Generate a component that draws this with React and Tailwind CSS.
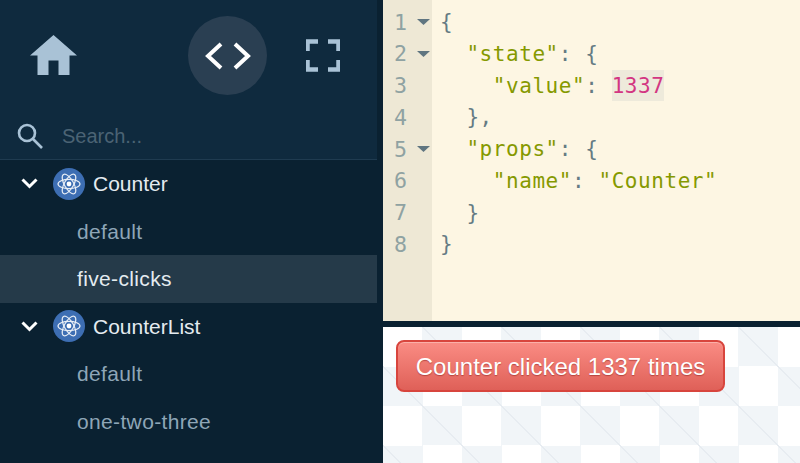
import React from "react";

function Atom() {
  return (
    <span className="flex h-8 w-8 shrink-0 items-center justify-center rounded-full bg-[#3d6eb3]">
      <svg width="26" height="26" viewBox="0 0 26 26" fill="none" stroke="#e8eef6" strokeWidth="1.2">
        <ellipse cx="13" cy="13" rx="11" ry="4.6" />
        <ellipse cx="13" cy="13" rx="11" ry="4.6" transform="rotate(60 13 13)" />
        <ellipse cx="13" cy="13" rx="11" ry="4.6" transform="rotate(120 13 13)" />
        <circle cx="13" cy="13" r="2.4" fill="#ffffff" stroke="none" />
      </svg>
    </span>
  );
}

function Component({ name }) {
  return (
    <div className="flex h-[47.5px] items-center pl-[21px] text-[21px] text-[#e4ebf0]">
      <svg width="17" height="11" viewBox="0 0 17 11" fill="none" stroke="#ffffff" strokeWidth="3" className="shrink-0">
        <path d="M1.5 1.5 8.5 8.5 15.5 1.5" />
      </svg>
      <span className="ml-[15px]"><Atom /></span>
      <span className="ml-2">{name}</span>
    </div>
  );
}

function Fixture({ name, selected }) {
  return (
    <div
      className={
        selected
          ? "flex h-[47.5px] items-center bg-[#253a49] pl-[77px] text-[21px] tracking-[0.35px] text-[#e4ebf0]"
          : "flex h-[47.5px] items-center pl-[77px] text-[21px] tracking-[0.35px] text-[#8ea6b7]"
      }
    >
      {name}
    </div>
  );
}

function Sidebar() {
  return (
    <aside className="flex h-full w-[377px] shrink-0 flex-col bg-[#0a2131] font-['Liberation_Sans',sans-serif]">
      <div className="h-[160px] shrink-0 border-b border-[#1f3b50] bg-[#0f2a3e]">
        <div className="flex items-center py-4 pl-[14px]">
          <button className="flex h-[79px] w-[79px] items-center justify-center">
            <svg width="47" height="41" viewBox="0 0 47 41" fill="#a9c2d6">
              <path d="M23.5 0 47 20.5H39.5V40H28.5V25.5H18.5V40H7.5V20.5H0Z" />
            </svg>
          </button>
          <button className="ml-[95px] flex h-[79px] w-[79px] items-center justify-center rounded-full bg-[#2a3f52]">
            <svg width="48" height="28" viewBox="0 0 48 28" fill="none" stroke="#ffffff" strokeWidth="4">
              <path d="M17 2 4 14 17 26" />
              <path d="M31 2 44 14 31 26" />
            </svg>
          </button>
          <button className="ml-4 flex h-[79px] w-[79px] items-center justify-center">
            <svg width="34" height="33" viewBox="0 0 34 33" fill="none" stroke="#a9c2d6" strokeWidth="4.5">
              <path d="M1.5 12V2.5H12M22 2.5H32.5V12M32.5 21V30.5H22M12 30.5H1.5V21" />
            </svg>
          </button>
        </div>
        <div className="flex items-center pl-4 pt-[10px]">
          <svg width="28" height="28" viewBox="0 0 28 28" fill="none" stroke="#a9c2d6" strokeWidth="2.6" className="shrink-0">
            <circle cx="11" cy="11" r="8" />
            <path d="M16.5 16.5 26 26" />
          </svg>
          <span className="ml-[18px] text-[20px] text-[#4b6374]">Search...</span>
        </div>
      </div>
      <Component name="Counter" />
      <Fixture name="default" />
      <Fixture name="five-clicks" selected />
      <Component name="CounterList" />
      <Fixture name="default" />
      <Fixture name="one-two-three" />
    </aside>
  );
}

const Str = ({ children }) => <span className="text-[#859900]">{children}</span>;

function Line({ n, fold, children }) {
  return (
    <div className="flex h-[31.75px] items-start">
      <div className="flex h-full w-[49px] shrink-0 items-center bg-[#eee8d5] text-[21.6px] tracking-normal text-[#8fa2a2]">
        <span className="w-[24px] pt-[2px] text-right">{n}</span>
        {fold && (
          <svg width="13" height="6" viewBox="0 0 13 6" fill="#5f7580" className="ml-[10px] shrink-0">
            <path d="M0 0H13L6.5 6Z" />
          </svg>
        )}
      </div>
      <div className="whitespace-pre pl-2 leading-[33.75px]">{children}</div>
    </div>
  );
}

function Editor() {
  return (
    <div className="flex h-[321px] shrink-0 flex-col bg-[#fdf6e3] font-['DejaVu_Sans_Mono',monospace] text-[21px] tracking-[0.56px] text-[#657b83]">
      <div className="h-[6px] w-[49px] shrink-0 bg-[#eee8d5]" />
      <Line n="1" fold>{"{"}</Line>
      <Line n="2" fold>{"  "}<Str>"state"</Str>{": {"}</Line>
      <Line n="3">{"    "}<Str>"value"</Str>{": "}<span className="inline-block h-[31.75px] bg-[#eeeadb] leading-[33.75px] text-[#d33682]">1337</span></Line>
      <Line n="4">{"  },"}</Line>
      <Line n="5" fold>{"  "}<Str>"props"</Str>{": {"}</Line>
      <Line n="6">{"    "}<Str>"name"</Str>{": "}<Str>"Counter"</Str></Line>
      <Line n="7">{"  }"}</Line>
      <Line n="8">{"}"}</Line>
      <div className="w-[49px] flex-1 bg-[#eee8d5]" />
    </div>
  );
}

function Preview() {
  return (
    <div className="min-h-0 flex-1 bg-[linear-gradient(45deg,transparent_24.6%,#e7ecf1_24.6%_25.4%,transparent_25.4%_74.6%,#e7ecf1_74.6%_75.4%,transparent_75.4%),conic-gradient(#f1f5f8_25%,#ffffff_0_50%,#f1f5f8_0_75%,#ffffff_0)] bg-[length:79px_79px] pl-[13px] pt-[13px] font-['Liberation_Sans',sans-serif]">
      <button className="flex h-[52px] w-[329px] items-center justify-center rounded-[8px] border-2 border-[#d8453d] bg-gradient-to-b from-[#fa8c84] to-[#df6058] pt-[2px] text-[24px] text-white shadow-[inset_0_1px_0_#fbb0a9] [text-shadow:0_1px_1px_rgba(120,20,20,0.45)]">
        Counter clicked 1337 times
      </button>
    </div>
  );
}

export default function App() {
  return (
    <div className="flex h-[463px] w-[800px] overflow-hidden bg-[#0a2131]">
      <Sidebar />
      <main className="ml-[6px] flex h-full min-w-0 flex-1 flex-col gap-[6px]">
        <Editor />
        <Preview />
      </main>
    </div>
  );
}
